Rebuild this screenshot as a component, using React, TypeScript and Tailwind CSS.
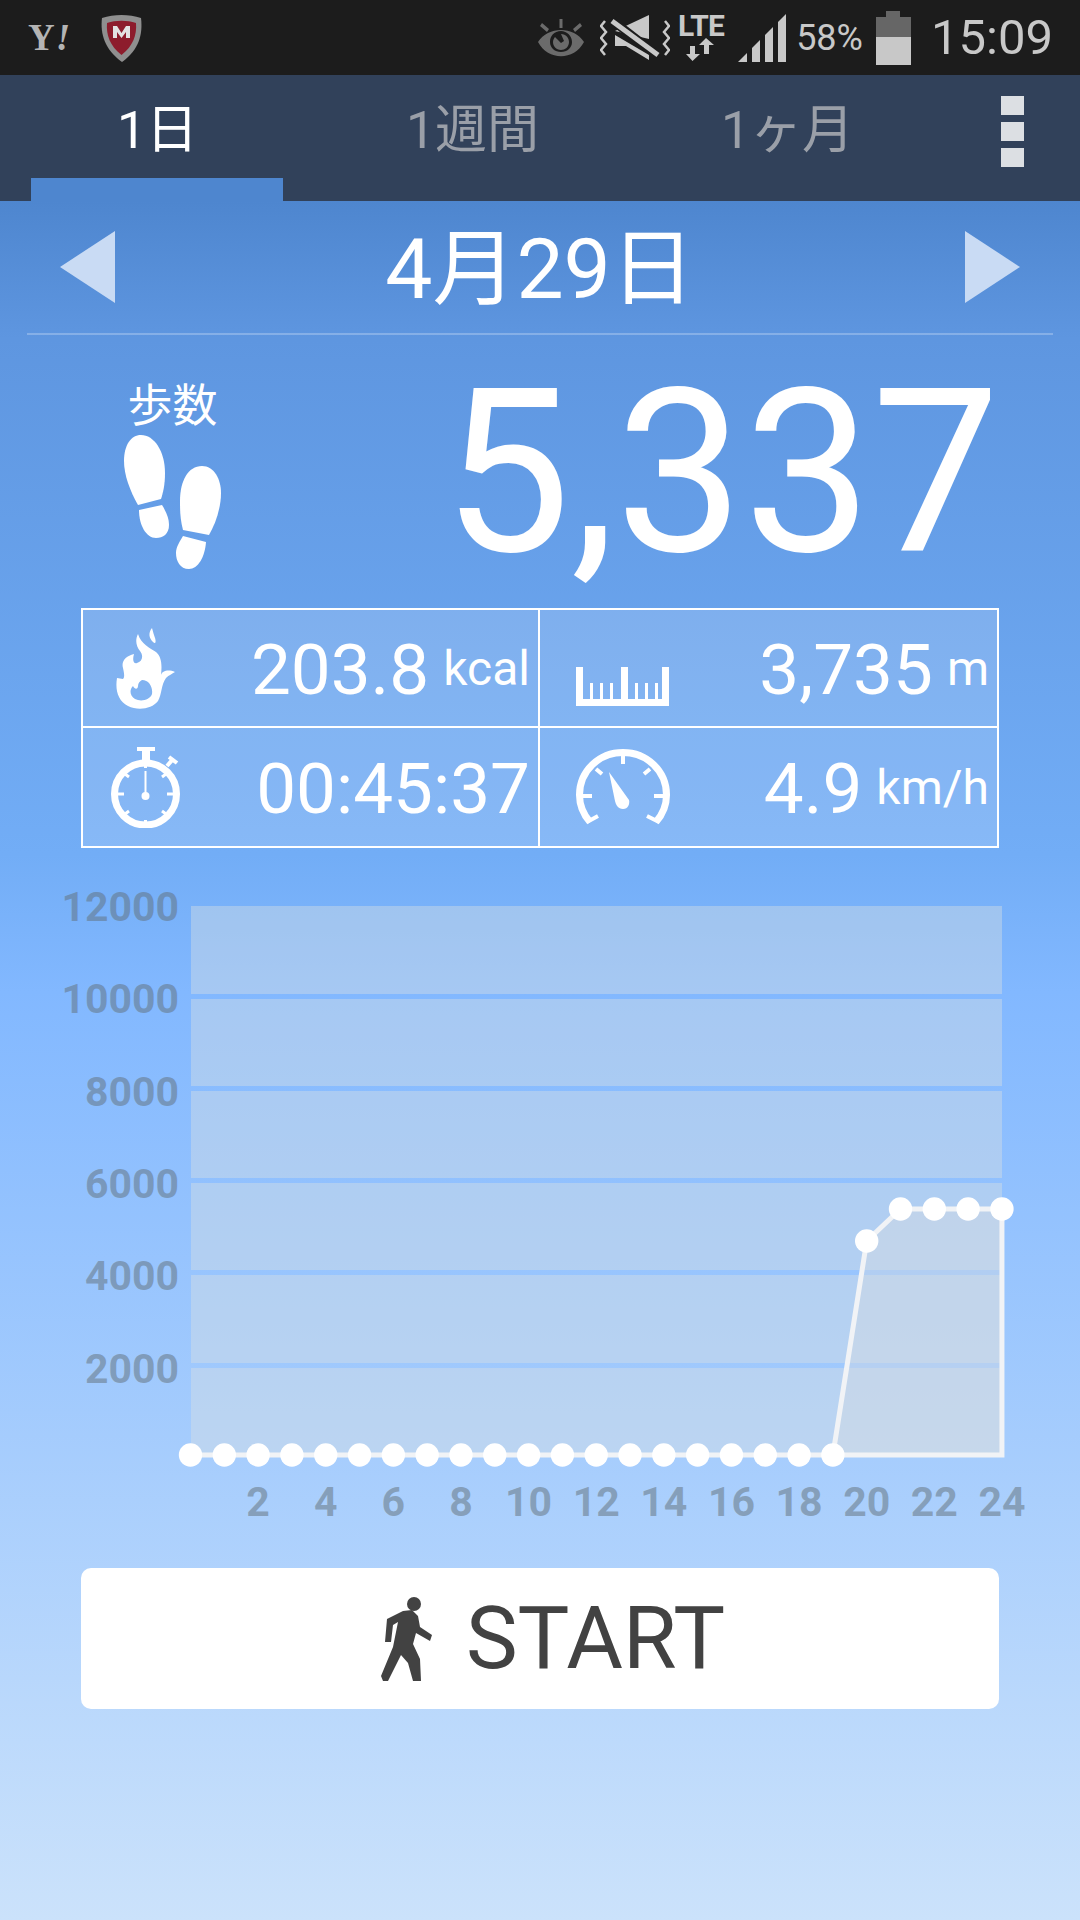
const xAxis = [2, 4, 6, 8, 10, 12, 14, 16, 18, 20, 22, 24];
const yAxis = ['12000', '10000', '8000', '6000', '4000', '2000'];
const bands = [
  [905, 993],
  [998, 1085],
  [1090, 1177],
  [1182, 1269],
  [1274, 1362],
  [1367, 1454],
];

const px = (hour: number) => 190.5 + hour * 33.81;
const points = Array.from({ length: 25 }, (_, hour) => ({
  x: px(hour),
  y: hour < 20 ? 1454 : hour === 20 ? 1240 : 1208,
}));

function Feet() {
  return (
    <svg width="97" height="134" viewBox="0 0 97 134" fill="#fff">
      <path d="M17 0C30 0 41 16 41 38C41 50 39 58 37 64L14 70C6 56 0 40 0 26C0 10 7 0 17 0Z" />
      <path d="M15 75L38 70C43 78 45 84 45 90C45 99 39 103 32 103C22 103 15 90 15 75Z" />
      <path d="M78 31C90 31 97 44 97 58C97 72 92 88 85 100L59 95C56 84 56 74 56 66C56 46 64 31 78 31Z" />
      <path d="M59 101L82 107C81 122 74 134 65 134C56 134 52 126 52 118C52 112 56 106 59 101Z" />
    </svg>
  );
}

function Flame() {
  return (
    <svg width="59" height="81" viewBox="0 0 59 81" fill="#fff">
      <path d="M36 0C32 5 33 10 37 14C40 17 40 13 39 10C38 7 37 4 36 0Z" />
      <path
        fillRule="evenodd"
        d="M22 6C19 12 20 18 24 23C28 28 26 34 21 35C18 36 16 33 18 26C10 28 5 33 7 40C8 45 9 49 7 51L1 50C-1 62 2 73 12 78C22 83 36 81 42 73C46 66 45 57 50 50C53 47 56 46 59 44C52 41 46 43 45 47C46 38 46 29 40 24C34 20 25 16 22 6ZM26 52C33 52 37 59 36 66C34 72 25 74 19 71C14 68 13 62 17 58C19 62 22 61 22 58C22 55 24 53 26 52Z"
      />
    </svg>
  );
}

function Ruler() {
  return (
    <svg width="93" height="39" viewBox="0 0 93 39" fill="#fff">
      <rect x="0" y="32" width="93" height="7" />
      <rect x="0" y="0" width="7" height="34" />
      <rect x="45" y="0" width="7" height="34" />
      <rect x="86" y="0" width="7" height="34" />
      <rect x="14" y="16" width="3" height="18" />
      <rect x="24" y="16" width="3" height="18" />
      <rect x="34" y="16" width="3" height="18" />
      <rect x="59" y="16" width="3" height="18" />
      <rect x="69" y="16" width="3" height="18" />
      <rect x="79" y="16" width="3" height="18" />
    </svg>
  );
}

function Stopwatch() {
  return (
    <svg width="69" height="81" viewBox="0 0 69 81" fill="none" stroke="#fff">
      <rect x="26" y="0" width="18" height="4" fill="#fff" stroke="none" />
      <rect x="31" y="3" width="8" height="10" fill="#fff" stroke="none" />
      <path d="M56 19L62 12M58 10L66 16" strokeWidth="4" />
      <circle cx="34.5" cy="47" r="31" strokeWidth="7" />
      <path d="M34.5 24V46" strokeWidth="2" />
      <circle cx="34.5" cy="49" r="4" fill="#fff" stroke="none" />
      <path
        d="M34.5 17V21M34.5 73V77M5 47H13M56 47H64M14 27L18 30M55 27L51 30M14 67L18 64M55 67L51 64"
        strokeWidth="3"
      />
    </svg>
  );
}

function Gauge() {
  return (
    <svg width="94" height="77" viewBox="0 0 94 77" fill="none" stroke="#fff">
      <path d="M14 73C7 65 3.500 56 3.500 46C3.500 22 23 3.500 47 3.500C71 3.500 90.500 22 90.500 46C90.500 56 87 65 80 73" strokeWidth="7" />
      <path d="M47 5V15M20 20L26 25M74 20L68 25M4 47H16M78 47H90M11 73L22 67M83 73L71 67" strokeWidth="4" />
      <path d="M33 23L53 51C54 55 52 60 47 60C42 60 40 56 39 52Z" fill="#fff" stroke="none" />
    </svg>
  );
}

function Walker() {
  return (
    <svg width="51" height="84" viewBox="0 0 51 84" fill="#424242">
      <circle cx="33" cy="7" r="7" />
      <path d="M22 14L6 22L4 45L10 45L12 28L17 25L12 50L0 79L2 84L7 84L20 58L27 66L32 84L40 84L39 62L32 47L35 36L49 44L51 38L39 30L37 19L31 13Z" />
    </svg>
  );
}

function Shield() {
  return (
    <svg width="45" height="48" viewBox="0 0 45 48">
      <path d="M3 4C15 0 30 0 42 4C44 20 40 36 23 48C6 36 1 20 3 4Z" fill="#8f8f8f" />
      <path d="M8 9C17 6 28 6 37 9C38 21 34 32 22.500 41C11 32 7 21 8 9Z" fill="#8d1c2c" />
      <path d="M14 24V12H18L22.500 19L27 12H31V24H27V18L22.500 24L18 18V24Z" fill="#e2e2e2" />
    </svg>
  );
}

function Eye() {
  return (
    <svg width="46" height="38" viewBox="0 0 46 38" fill="#6b6b6b">
      <path d="M21.500 0H24.500V9H21.500ZM2 7L4 4L11 10L9 13ZM44 7L42 4L35 10L37 13Z" />
      <path
        fillRule="evenodd"
        d="M0 23C10 7 36 7 46 23C36 42 10 42 0 23ZM23 12C16 12 12 17 12 23C12 29 17 33 23 33C29 33 34 29 34 23C34 17 29 12 23 12Z"
      />
      <path d="M23 15C28 15 31 19 31 23C31 28 27 31 23 31C18 31 15 27 15 23C15 21 16 19 17 18L23 24L26 22Z" />
    </svg>
  );
}

function Mute() {
  return (
    <svg width="70" height="45" viewBox="0 0 70 45">
      <path d="M15 16L49 0V24ZM15 20V31H26L49 45V40Z" fill="#c8c8c8" />
      <path d="M13 6L57 40" stroke="#1c1c1c" strokeWidth="9" />
      <path d="M12 6L58 40" stroke="#c8c8c8" strokeWidth="5" />
      <path
        d="M5 6L1 11L6 17L1 23L6 29L1 35L5 40M65 6L69 11L64 17L69 23L64 29L69 35L65 40"
        stroke="#c8c8c8"
        strokeWidth="2.500"
        fill="none"
      />
    </svg>
  );
}

function Arrows() {
  return (
    <svg width="30" height="23" viewBox="0 0 30 23" fill="#c8c8c8">
      <path d="M4 8H9V16H14L6.500 23L0 16H4Z" />
      <path d="M18 16V7H13L20 0L28 7H23V16Z" />
    </svg>
  );
}

function Signal() {
  return (
    <svg width="48" height="48" viewBox="0 0 48 48" fill="#c8c8c8">
      <path d="M0 48L9 39V48Z" />
      <path d="M14 34L22 26V48H14Z" />
      <path d="M27 21L35 13V48H27Z" />
      <path d="M40 8L48 0V48H40Z" />
    </svg>
  );
}

function Triangle({ right }: { right?: boolean }) {
  return (
    <svg width="55" height="72" viewBox="0 0 55 72" fill="#c9dbf4">
      <path d={right ? 'M0 0L55 36L0 72Z' : 'M55 0L0 36L55 72Z'} />
    </svg>
  );
}

function Stat({
  icon,
  value,
  unit,
  iconClass,
  cellClass,
}: {
  icon: React.ReactNode;
  value: string;
  unit?: string;
  iconClass: string;
  cellClass: string;
}) {
  return (
    <div className={`flex items-center pr-[8px] border-white ${cellClass}`}>
      <div className={iconClass}>{icon}</div>
      <div className="ml-auto pt-[3px] flex items-end text-white">
        <span className="text-[71px] leading-none">{value}</span>
        {unit && <span className="ml-[14px] mb-[12px] text-[48px] leading-none">{unit}</span>}
      </div>
    </div>
  );
}

function Chart() {
  const line = points.map((p) => `${p.x},${p.y}`).join(' ');
  const fill = `${px(19)},1454 ${px(20)},1240 ${px(21)},1208 ${px(24)},1208 ${px(24)},1454`;
  return (
    <svg width="1000" height="640" viewBox="40 885 1000 640" className="mt-[38px] ml-[40px]">
      {bands.map(([top, bottom]) => (
        <rect key={top} x="191" y={top} width="811" height={bottom - top} fill="#dde2e2" fillOpacity="0.4" />
      ))}
      <polygon points={fill} fill="#d8dce0" fillOpacity="0.4" />
      <polyline
        points={`${line} ${px(24)},1454 ${px(19)},1454`}
        fill="none"
        stroke="#f1f3f6"
        strokeWidth="5"
      />
      {points.map((p) => (
        <circle key={p.x} cx={p.x} cy={p.y} r="11.700" fill="#fff" />
      ))}
      {yAxis.map((label, i) => (
        <text
          key={label}
          x="179"
          y={920 + i * 92.3}
          textAnchor="end"
          fill="#616f78"
          fillOpacity="0.5"
          fontWeight="700"
          fontSize="41"
        >
          {label}
        </text>
      ))}
      {xAxis.map((hour) => (
        <text
          key={hour}
          x={px(hour)}
          y="1515"
          textAnchor="middle"
          fill="#616f78"
          fillOpacity="0.5"
          fontWeight="700"
          fontSize="41"
        >
          {hour}
        </text>
      ))}
    </svg>
  );
}

export default function App() {
  return (
    <div className="w-[1080px] h-[1920px] overflow-hidden flex flex-col font-['Roboto','Noto_Sans_CJK_JP',sans-serif]">
      {/* status bar */}
      <div className="h-[75px] shrink-0 bg-[#1c1c1c] flex items-center text-[#c8c8c8]">
        <span className="ml-[28px] w-[45px] font-['Liberation_Serif',serif] font-bold text-[37px] tracking-[1px] leading-none text-[#b4b4b4]">
          Y<i>!</i>
        </span>
        <div className="ml-[26px]">
          <Shield />
        </div>
        <div className="ml-auto">
          <Eye />
        </div>
        <div className="ml-[16px]">
          <Mute />
        </div>
        <div className="ml-[8px] flex flex-col items-center">
          <span className="text-[30px] leading-[24px] font-bold tracking-tight">LTE</span>
          <Arrows />
        </div>
        <div className="ml-[14px]">
          <Signal />
        </div>
        <span className="ml-[10px] text-[36px] leading-none">58%</span>
        <div className="ml-[13px] w-[35px] h-[54px] flex flex-col items-center">
          <div className="w-[14px] h-[6px] bg-[#666]" />
          <div className="w-full h-[20px] bg-[#666]" />
          <div className="w-full flex-1 bg-[#c8c8c8]" />
        </div>
        <span className="ml-[20px] mr-[27px] text-[49px] leading-none">15:09</span>
      </div>

      {/* tabs */}
      <div className="h-[126px] shrink-0 bg-[#31415a] flex">
        <div className="w-[315px] flex flex-col">
          <div className="flex-1 pt-[8px] flex items-center justify-center text-white text-[52px] leading-none">1日</div>
          <div className="ml-[31px] w-[252px] h-[23px] bg-[#4e86cf]" />
        </div>
        <div className="w-[315px] pt-[8px] pb-[23px] flex items-center justify-center text-[#9a9fa8] text-[52px] leading-none">
          1週間
        </div>
        <div className="w-[315px] pt-[8px] pb-[23px] flex items-center justify-center text-[#9a9fa8] text-[52px] leading-none">
          1ヶ月
        </div>
        <div className="ml-[56px] pt-[21px] flex flex-col gap-[7px]">
          <div className="w-[23px] h-[19px] bg-[#dcdfe3]" />
          <div className="w-[23px] h-[19px] bg-[#dcdfe3]" />
          <div className="w-[23px] h-[19px] bg-[#dcdfe3]" />
        </div>
      </div>

      <div className="flex-1 flex flex-col bg-[linear-gradient(to_bottom,#4e86cf_0%,#5e96e0_8%,#72adf6_38%,#82b8ff_46%,#cbe2fb_100%)]">
        {/* date */}
        <div className="mx-[27px] h-[134px] shrink-0 border-b-2 border-white/25 flex items-center justify-between px-[33px]">
          <Triangle />
          <span className="text-white text-[84px] leading-none pt-[6px]">4月29日</span>
          <Triangle right />
        </div>

        {/* steps */}
        <div className="h-[273px] shrink-0 flex">
          <div className="ml-[124px] pt-[50px] flex flex-col">
            <span className="self-center text-white text-[45px] leading-[44px]">歩数</span>
            <div className="mt-[6px]">
              <Feet />
            </div>
          </div>
          <span className="ml-auto mr-[80px] mt-[2px] text-white text-[228px] leading-[273px]">5,337</span>
        </div>

        {/* stats */}
        <div className="mx-[81px] w-[918px] h-[240px] shrink-0 grid grid-cols-2 grid-rows-2 border-2 border-white bg-white/15">
          <Stat icon={<Flame />} value="203.8" unit="kcal" iconClass="ml-[33px]" cellClass="border-r-2 border-b-2" />
          <Stat icon={<Ruler />} value="3,735" unit="m" iconClass="ml-[36px] mt-[37px]" cellClass="border-b-2" />
          <Stat icon={<Stopwatch />} value="00:45:37" iconClass="ml-[28px]" cellClass="border-r-2" />
          <Stat icon={<Gauge />} value="4.9" unit="km/h" iconClass="ml-[36px]" cellClass="" />
        </div>

        <Chart />

        {/* start */}
        <div className="mt-[42px] mx-[81px] h-[141px] shrink-0 bg-white rounded-[10px] flex items-center justify-center gap-[34px] pl-[26px] text-[#424242]">
          <Walker />
          <span className="text-[87px] leading-none">START</span>
        </div>
      </div>
    </div>
  );
}
